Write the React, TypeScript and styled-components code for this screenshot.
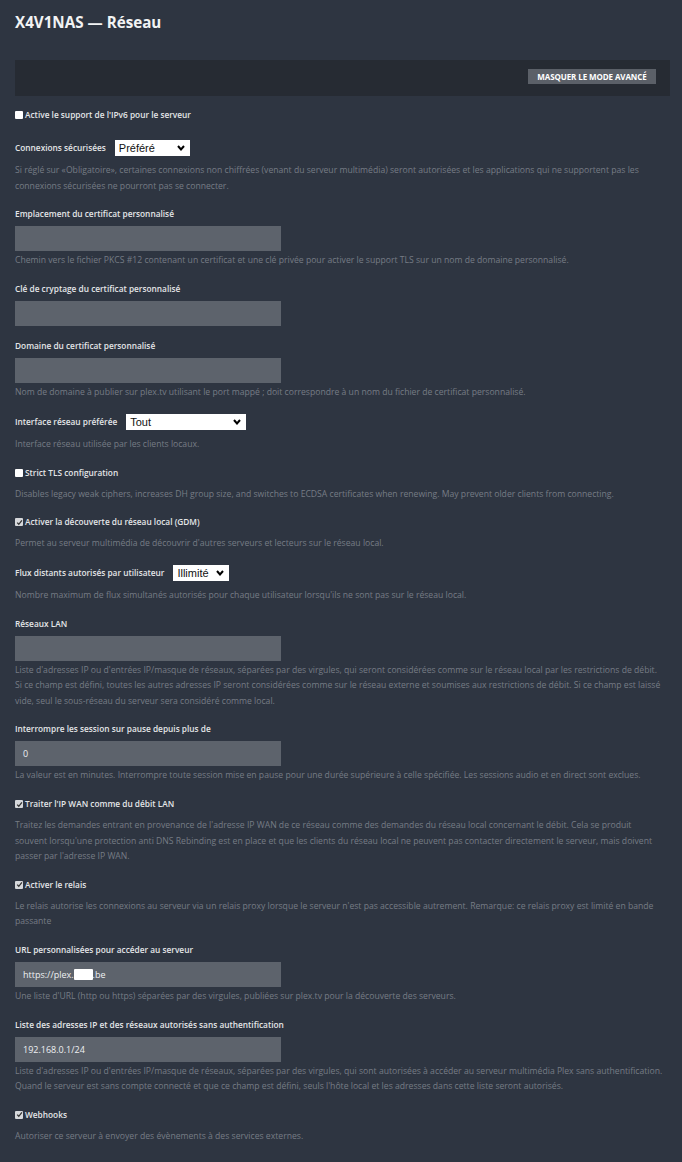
import React from "react";
import styled, { createGlobalStyle } from "styled-components";

const GlobalStyle = createGlobalStyle`
  html, body {
    margin: 0;
    padding: 0;
    background: #2e3541;
  }
  body {
    font-family: "Open Sans", "Noto Sans", sans-serif;
    -webkit-font-smoothing: antialiased;
  }
  * { box-sizing: border-box; }
`;

const Page = styled.div`
  min-height: 1162px;
  padding: 12px 12px 20px 15px;
  background: #2e3541;
`;

const Title = styled.h1`
  margin: 0;
  font-size: 15.2px;
  line-height: 20px;
  font-weight: 700;
  color: #f2f3f4;
`;

const Bar = styled.div`
  margin-top: 28px;
  height: 36px;
  background: #262b33;
  display: flex;
  justify-content: flex-end;
  align-items: flex-start;
  padding: 9px 14px 0 0;
`;

const AdvancedButton = styled.button`
  width: 128px;
  height: 15px;
  padding: 0;
  border: none;
  background: #5b6068;
  color: #ffffff;
  font-family: "Open Sans", sans-serif;
  font-size: 8px;
  font-weight: 700;
  line-height: 15px;
  text-transform: uppercase;
  letter-spacing: -0.1px;
`;

const Settings = styled.div`
  display: flex;
  flex-direction: column;
  gap: 13.2px;
  margin-top: 12px;
`;

const Section = styled.div<{ $extra?: number }>`
  display: flex;
  flex-direction: column;
  margin-bottom: ${(p) => p.$extra ?? 0}px;
`;

const FieldLabel = styled.div`
  font-size: 8.3px;
  line-height: 14px;
  font-weight: 600;
  color: #e4e6e8;
  white-space: nowrap;
`;

const InputBox = styled.div`
  width: 266px;
  height: 25px;
  margin-top: 5px;
  background: #5d636c;
  display: flex;
  align-items: center;
  padding: 0 8px;
  font-size: 9px;
  color: #eef0f2;
`;

const Redacted = styled.span`
  display: inline-block;
  width: 19px;
  height: 11px;
  background: #ffffff;
  border-radius: 1px;
  vertical-align: middle;
`;

const Help = styled.p<{ $after: "input" | "row" }>`
  margin: ${(p) => (p.$after === "input" ? 2 : 7)}px 5px 0 0;
  font-size: 8.65px;
  line-height: 15.5px;
  color: #767c85;
`;

const CheckRow = styled.label`
  display: flex;
  align-items: center;
  gap: 2px;
  height: 14px;
`;

const Box = styled.span<{ $checked?: boolean }>`
  width: 8px;
  height: 8px;
  flex: none;
  display: flex;
  align-items: center;
  justify-content: center;
  background: ${(p) => (p.$checked ? "#d6d8db" : "#ffffff")};
  border-radius: 1px;
`;

const SelectRow = styled.div`
  display: flex;
  align-items: center;
  gap: 9px;
  height: 16px;
`;

const SelectBox = styled.div<{ $w: number }>`
  width: ${(p) => p.$w}px;
  height: 16px;
  background: #ffffff;
  color: #111;
  display: flex;
  align-items: center;
  justify-content: space-between;
  padding: 0 5px 0 4px;
  font-family: "Liberation Sans", Arial, sans-serif;
  font-size: 11px;
`;

const Chevron = () => (
  <svg width="8" height="6" viewBox="0 0 8 6">
    <polyline points="1,1 4,4.5 7,1" fill="none" stroke="#000" strokeWidth="2" />
  </svg>
);

const Tick = () => (
  <svg width="7" height="7" viewBox="0 0 7 7">
    <polyline points="1.2,3.6 2.8,5.3 5.9,1.4" fill="none" stroke="#333" strokeWidth="1.3" />
  </svg>
);

const Check = ({ checked, label }: { checked?: boolean; label: string }) => (
  <CheckRow>
    <Box $checked={checked}>{checked && <Tick />}</Box>
    <FieldLabel>{label}</FieldLabel>
  </CheckRow>
);

const Select = ({ label, value, width }: { label: string; value: string; width: number }) => (
  <SelectRow>
    <FieldLabel>{label}</FieldLabel>
    <SelectBox $w={width}>
      <span>{value}</span>
      <Chevron />
    </SelectBox>
  </SelectRow>
);

export default function App() {
  return (
    <>
      <GlobalStyle />
      <Page>
        <Title>X4V1NAS — Réseau</Title>
        <Bar>
          <AdvancedButton>Masquer le mode avancé</AdvancedButton>
        </Bar>
        <Settings>
          <Section $extra={5}>
            <Check label="Active le support de l'IPv6 pour le serveur" />
          </Section>

          <Section>
            <Select label="Connexions sécurisées" value="Préféré" width={75} />
            <Help $after="row">
              Si réglé sur «Obligatoire», certaines connexions non chiffrées (venant du serveur multimédia) seront
              autorisées et les applications qui ne supportent pas les connexions sécurisées ne pourront pas se
              connecter.
            </Help>
          </Section>

          <Section>
            <FieldLabel>Emplacement du certificat personnalisé</FieldLabel>
            <InputBox />
            <Help $after="input">
              Chemin vers le fichier PKCS #12 contenant un certificat et une clé privée pour activer le support TLS
              sur un nom de domaine personnalisé.
            </Help>
          </Section>

          <Section>
            <FieldLabel>Clé de cryptage du certificat personnalisé</FieldLabel>
            <InputBox />
          </Section>

          <Section>
            <FieldLabel>Domaine du certificat personnalisé</FieldLabel>
            <InputBox />
            <Help $after="input">
              Nom de domaine à publier sur plex.tv utilisant le port mappé ; doit correspondre à un nom du fichier de
              certificat personnalisé.
            </Help>
          </Section>

          <Section>
            <Select label="Interface réseau préférée" value="Tout" width={120} />
            <Help $after="row">Interface réseau utilisée par les clients locaux.</Help>
          </Section>

          <Section>
            <Check label="Strict TLS configuration" />
            <Help $after="row">
              Disables legacy weak ciphers, increases DH group size, and switches to ECDSA certificates when renewing.
              May prevent older clients from connecting.
            </Help>
          </Section>

          <Section>
            <Check checked label="Activer la découverte du réseau local (GDM)" />
            <Help $after="row">
              Permet au serveur multimédia de découvrir d'autres serveurs et lecteurs sur le réseau local.
            </Help>
          </Section>

          <Section>
            <Select label="Flux distants autorisés par utilisateur" value="Illimité" width={56} />
            <Help $after="row">
              Nombre maximum de flux simultanés autorisés pour chaque utilisateur lorsqu'ils ne sont pas sur le
              réseau local.
            </Help>
          </Section>

          <Section>
            <FieldLabel>Réseaux LAN</FieldLabel>
            <InputBox />
            <Help $after="input">
              Liste d'adresses IP ou d'entrées IP/masque de réseaux, séparées par des virgules, qui seront considérées
              comme sur le réseau local par les restrictions de débit. Si ce champ est défini, toutes les autres
              adresses IP seront considérées comme sur le réseau externe et soumises aux restrictions de débit. Si ce
              champ est laissé vide, seul le sous-réseau du serveur sera considéré comme local.
            </Help>
          </Section>

          <Section>
            <FieldLabel>Interrompre les session sur pause depuis plus de</FieldLabel>
            <InputBox>0</InputBox>
            <Help $after="input">
              La valeur est en minutes. Interrompre toute session mise en pause pour une durée supérieure à celle
              spécifiée. Les sessions audio et en direct sont exclues.
            </Help>
          </Section>

          <Section>
            <Check checked label="Traiter l'IP WAN comme du débit LAN" />
            <Help $after="row">
              Traitez les demandes entrant en provenance de l'adresse IP WAN de ce réseau comme des demandes du réseau
              local concernant le débit. Cela se produit souvent lorsqu'une protection anti DNS Rebinding est en place
              et que les clients du réseau local ne peuvent pas contacter directement le serveur, mais doivent passer
              par l'adresse IP WAN.
            </Help>
          </Section>

          <Section>
            <Check checked label="Activer le relais" />
            <Help $after="row">
              Le relais autorise les connexions au serveur via un relais proxy lorsque le serveur n'est pas accessible
              autrement. Remarque: ce relais proxy est limité en bande passante
            </Help>
          </Section>

          <Section>
            <FieldLabel>URL personnalisées pour accéder au serveur</FieldLabel>
            <InputBox>
              https://plex.<Redacted />.be
            </InputBox>
            <Help $after="input">
              Une liste d'URL (http ou https) séparées par des virgules, publiées sur plex.tv pour la découverte des
              serveurs.
            </Help>
          </Section>

          <Section>
            <FieldLabel>Liste des adresses IP et des réseaux autorisés sans authentification</FieldLabel>
            <InputBox>192.168.0.1/24</InputBox>
            <Help $after="input">
              Liste d'adresses IP ou d'entrées IP/masque de réseaux, séparées par des virgules, qui sont autorisées à
              accéder au serveur multimédia Plex sans authentification. Quand le serveur est sans compte connecté et
              que ce champ est défini, seuls l'hôte local et les adresses dans cette liste seront autorisés.
            </Help>
          </Section>

          <Section>
            <Check checked label="Webhooks" />
            <Help $after="row">Autoriser ce serveur à envoyer des évènements à des services externes.</Help>
          </Section>
        </Settings>
      </Page>
    </>
  );
}
